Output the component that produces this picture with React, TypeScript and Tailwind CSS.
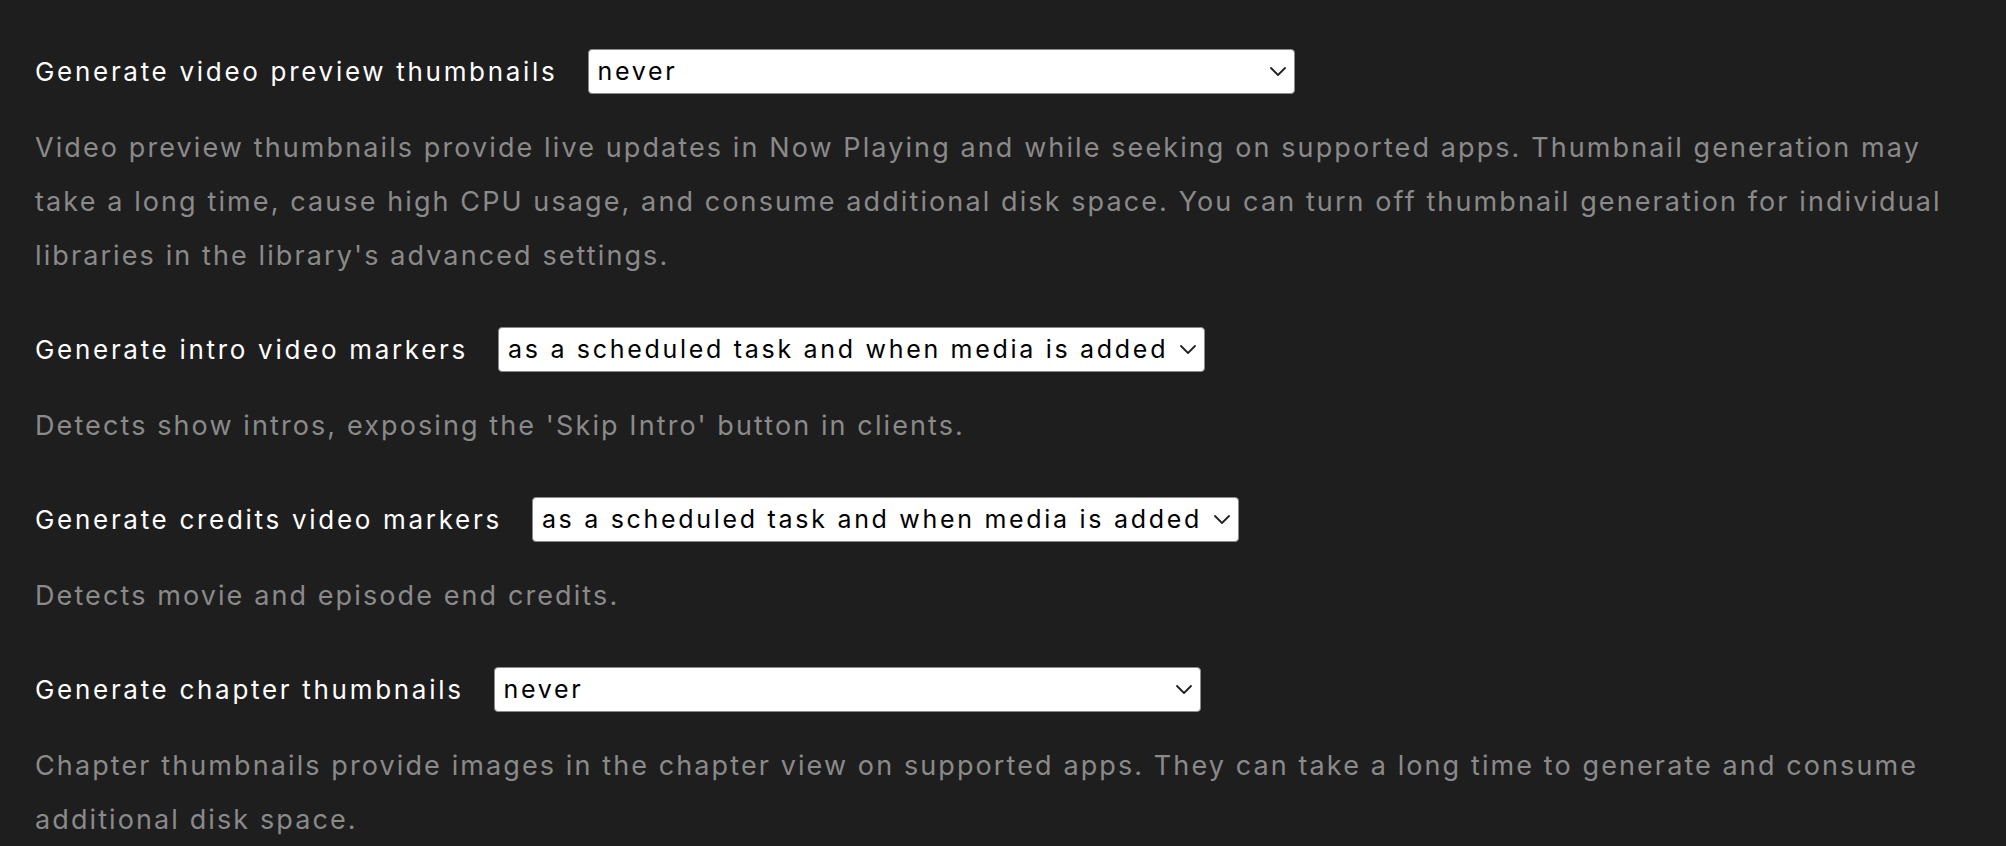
const settings = [
  {
    label: "Generate video preview thumbnails",
    value: "never",
    help: "Video preview thumbnails provide live updates in Now Playing and while seeking on supported apps. Thumbnail generation may take a long time, cause high CPU usage, and consume additional disk space. You can turn off thumbnail generation for individual libraries in the library's advanced settings.",
  },
  {
    label: "Generate intro video markers",
    value: "as a scheduled task and when media is added",
    help: "Detects show intros, exposing the 'Skip Intro' button in clients.",
  },
  {
    label: "Generate credits video markers",
    value: "as a scheduled task and when media is added",
    help: "Detects movie and episode end credits.",
  },
  {
    label: "Generate chapter thumbnails",
    value: "never",
    help: "Chapter thumbnails provide images in the chapter view on supported apps. They can take a long time to generate and consume additional disk space.",
  },
];

function FakeSelect({ value }: { value: string }) {
  return (
    <div className="flex h-[45px] w-[707px] items-center justify-between rounded-[4px] border border-[#8a8a8a] bg-white pl-[9px] pr-[8px] text-[25px] tracking-[2.7px] text-black">
      <span className="whitespace-nowrap">{value}</span>
      {/* native-looking chevron */}
      <svg width="16" height="9" viewBox="0 0 16 9" fill="none" className="shrink-0">
        <path d="M1 1l7 7 7-7" stroke="#222" strokeWidth="1.8" strokeLinecap="round" strokeLinejoin="round" />
      </svg>
    </div>
  );
}

export default function App() {
  return (
    <div className="h-[846px] w-full overflow-hidden bg-[#1e1e1e] px-[35px] pt-[49px] font-['Inter',sans-serif]">
      {settings.map((s, i) => (
        <div key={i} className="mb-[44px]">
          <div className="flex items-center gap-[30px]">
            <label className="whitespace-nowrap text-[26px] tracking-[2.7px] text-white">{s.label}</label>
            <FakeSelect value={s.value} />
          </div>
          <p className="mt-[27px] text-[27px] leading-[54px] tracking-[2.1px] text-[#8a8a8a]">{s.help}</p>
        </div>
      ))}
    </div>
  );
}
